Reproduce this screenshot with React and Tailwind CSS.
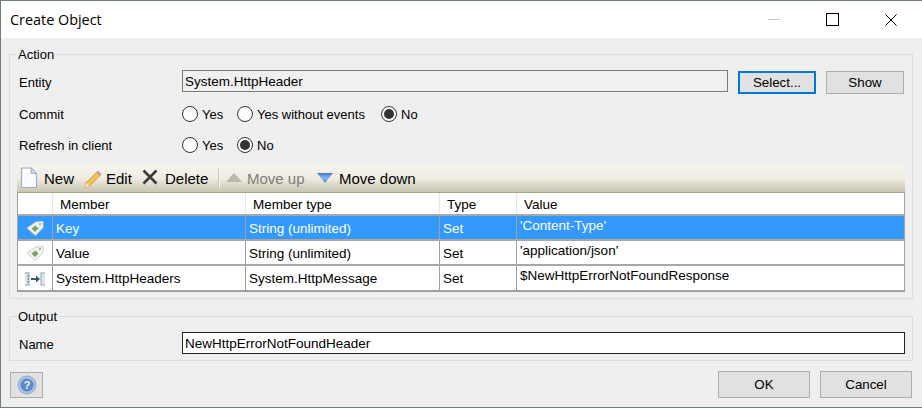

import React from "react";

const ui = "font-['Liberation_Sans','Arial',sans-serif]";

function Radio({ checked, label, className = "" }) {
  return (
    <span className={"flex items-center " + className}>
      <span className="flex h-[16px] w-[16px] shrink-0 items-center justify-center rounded-full border border-[#333] bg-white">
        {checked && <span className="h-[10px] w-[10px] rounded-full bg-[#333]" />}
      </span>
      <span className="ml-[4px] mt-[1px] text-[13px] leading-[16px] text-black">{label}</span>
    </span>
  );
}

function Btn({ children, className = "", focused = false }) {
  return (
    <button
      className={
        "flex items-center justify-center bg-[#e1e1e1] text-[13.33px] text-black " +
        (focused ? "border-2 border-[#0078d7] " : "border border-[#adadad] ") +
        className
      }
    >
      {children}
    </button>
  );
}

function TagIcon() {
  return (
    <svg width="20" height="20" viewBox="0 0 20 20" className="block">
      <path d="M2 10 L11 4 L18 3.5 L18 9.5 L10.5 17.5 Z" fill="#f4f4ef" stroke="#cfcfc8" strokeWidth="1" strokeLinejoin="round" />
      <circle cx="15" cy="6.2" r="1.1" fill="#a5a59e" />
      <path d="M6.5 10.5 L10.5 7.5 L13.5 10.5 L9.8 14 Z" fill="#72a468" />
    </svg>
  );
}

function LinkIcon() {
  return (
    <svg width="22" height="16" viewBox="0 0 22 16" className="block">
      <path d="M1 2 H5 V14 H1 M21 2 H17 V14 H21" fill="#dbe6f1" stroke="#a7bbd0" strokeWidth="1.4" />
      <path d="M7 8 H14" stroke="#44536a" strokeWidth="2" />
      <path d="M12 4.5 L16 8 L12 11.5 Z" fill="#44536a" />
      <path d="M4 4 V12" stroke="#5f7a96" strokeWidth="1" strokeDasharray="2 1" />
    </svg>
  );
}

const rows = [
  { icon: <TagIcon />, member: "Key", type: "String (unlimited)", t: "Set", value: "'Content-Type'", selected: true },
  { icon: <TagIcon />, member: "Value", type: "String (unlimited)", t: "Set", value: "'application/json'" },
  { icon: <LinkIcon />, member: "System.HttpHeaders", type: "System.HttpMessage", t: "Set", value: "$NewHttpErrorNotFoundResponse" },
];

const grid = "grid grid-cols-[35px_193px_194px_77px_1fr]";

function Table() {
  return (
    <div className="h-[99px] border-r border-b-2 border-l border-[#a0a0a0] bg-white text-[13.5px] leading-[16px] text-black">
      <div className={grid + " h-[23px] border-b-2 border-[#a8a8a8]"}>
        {["", "Member", "Member type", "Type", "Value"].map((h, i) => (
          <div key={i} className={"flex items-center pl-[7px] pt-[2px] " + (i < 4 ? "border-r border-[#e6e6e6]" : "")}>
            {h}
          </div>
        ))}
      </div>
      {rows.map((r, i) => {
        const cell = "flex items-center border-r border-[#a0a0a0] pl-[3px] " + (i < 2 ? "pt-[2px]" : "");
        return (
          <div
            key={r.member}
            className={grid + " h-[25px] " + (i < 2 ? "border-b-2 border-[#a8a8a8] " : "") + (r.selected ? "bg-[#3399ff] text-white" : "")}
          >
            <div className="flex items-center justify-center border-r border-[#a0a0a0]">{r.icon}</div>
            <div className={cell}>{r.member}</div>
            <div className={cell}>{r.type}</div>
            <div className={cell}>{r.t}</div>
            <div className="flex items-start pl-[3px] pt-[2px]">{r.value}</div>
          </div>
        );
      })}
    </div>
  );
}

function Toolbar() {
  return (
    <div className="flex h-[28px] items-center rounded-t-[2px] border-b border-[#a8a58e] bg-gradient-to-b from-[#f6f4ef] via-[#eeebe2] to-[#c8c5af] pl-[3px] text-[15px] leading-[16px] text-black">
      <svg width="18" height="22" viewBox="0 0 18 22" className="mt-[-1px] shrink-0">
        <path d="M1.5 1 H11 L16.5 6.5 V20.5 H1.5 Z" fill="#fafbff" stroke="#a4aac8" strokeWidth="1.2" />
        <path d="M11 1 V6.5 H16.5 Z" fill="#d5d9ea" stroke="#a4aac8" strokeWidth="1" />
      </svg>
      <span className="ml-[6px] w-[29px]">New</span>
      <svg width="20" height="20" viewBox="0 0 20 20" className="ml-[10px] shrink-0">
        <path d="M3 14 L13.5 3.5 L17 6.5 L6.5 17 L2 18.5 Z" fill="#f2c25a" stroke="#d49a35" strokeWidth="1" strokeLinejoin="round" />
        <path d="M13.5 3.5 L15 2 L18 5 L17 6.5 Z" fill="#e8a0a0" stroke="#c88" strokeWidth="0.8" />
        <path d="M2 18.5 L3 14 L6.5 17 Z" fill="#f7e6c8" />
      </svg>
      <span className="ml-[3px] w-[26px]">Edit</span>
      <svg width="18" height="18" viewBox="0 0 18 18" className="ml-[9px] mt-[-3px] shrink-0">
        <path d="M2.5 2.5 L15.5 15.5 M15.5 2.5 L2.5 15.5" stroke="#3a3a3a" strokeWidth="2.6" />
      </svg>
      <span className="ml-[6px] w-[44px]">Delete</span>
      <span className="ml-[9px] mr-[5px] h-[19px] w-[2px] shrink-0 border-r border-l border-r-[#f7f6f1] border-l-[#c6c3b2]" />
      <svg width="18" height="12" viewBox="0 0 18 12" className="mt-[-2px] shrink-0">
        <path d="M9 1 L17 10 H1 Z" fill="#b9b8ad" />
      </svg>
      <span className="ml-[4px] w-[59px] text-[#7d7d78]">Move up</span>
      <svg width="18" height="12" viewBox="0 0 18 12" className="ml-[10px] mt-[-1px] shrink-0">
        <defs>
          <linearGradient id="downArrow" x1="0" y1="0" x2="0" y2="1">
            <stop offset="0" stopColor="#3f77cf" />
            <stop offset="0.5" stopColor="#8db4e8" />
            <stop offset="1" stopColor="#4f86d6" />
          </linearGradient>
        </defs>
        <path d="M1 1 H17 L9 11 Z" fill="url(#downArrow)" />
      </svg>
      <span className="ml-[5px]">Move down</span>
    </div>
  );
}

export default function App() {
  return (
    <div className={"flex h-[408px] w-[922px] flex-col border-t border-b border-l border-[#6e7f72] bg-[#efefef] " + ui}>
      <header className="flex h-[37px] shrink-0 items-center justify-between bg-white pl-[9px] font-['Open_Sans',sans-serif] text-[14.4px] text-black">
        <span>Create Object</span>
        <div className="flex items-center">
          <span className="h-[1px] w-[12px] bg-[#c8c8c8]" />
          <span className="ml-[46px] h-[13px] w-[13px] border border-black" />
          <svg width="12" height="12" viewBox="0 0 12 12" className="ml-[46px] mr-[25px]">
            <path d="M0.5 0.5 L11.5 11.5 M11.5 0.5 L0.5 11.5" stroke="#000" strokeWidth="1" />
          </svg>
        </div>
      </header>

      <fieldset className="ml-[8px] mr-[9px] mt-[8px] h-[253px] border border-[#dcdcdc] px-[7px]">
        <legend className="h-[16px] px-[1px] pt-[1px] text-[13px] leading-[16px] text-black">Action</legend>
        <div className="mt-[8px] flex h-[24px] items-start">
          <span className="ml-[2px] w-[163px] pt-[5px] text-[13px] leading-[16px] text-black">Entity</span>
          <div className="flex h-[22px] w-[546px] items-center border border-[#7a7a7a] bg-[#f0f0f0] pl-[2px] pt-[2px] text-[13.5px] text-black">
            System.HttpHeader
          </div>
          <Btn focused className="ml-[10px] mt-[1px] h-[23px] w-[78px]">Select...</Btn>
          <Btn className="ml-[10px] mt-[1px] h-[23px] w-[78px]">Show</Btn>
        </div>
        <div className="mt-[12px] flex h-[16px] items-center">
          <span className="ml-[2px] mt-[2px] w-[163px] text-[13px] leading-[16px] text-black">Commit</span>
          <Radio label="Yes" className="w-[55px]" />
          <Radio label="Yes without events" className="w-[144px]" />
          <Radio label="No" checked />
        </div>
        <div className="mt-[15px] flex h-[16px] items-center">
          <span className="ml-[2px] mt-[2px] w-[163px] text-[13px] leading-[16px] text-black">Refresh in client</span>
          <Radio label="Yes" className="w-[55px]" />
          <Radio label="No" checked />
        </div>
        <div className="mt-[12px]">
          <Toolbar />
          <Table />
        </div>
      </fieldset>

      <fieldset className="ml-[8px] mr-[9px] mt-[9px] h-[53px] border border-[#dcdcdc] px-[7px]">
        <legend className="h-[16px] px-[1px] pt-[1px] text-[13px] leading-[16px] text-black">Output</legend>
        <div className="mt-[8px] flex h-[22px] items-center">
          <span className="ml-[2px] mt-[3px] w-[163px] text-[13px] text-black">Name</span>
          <div className="flex h-[22px] flex-1 items-center border border-[#222] bg-white pl-[2px] pt-[2px] text-[13.5px] text-black">
            NewHttpErrorNotFoundHeader
          </div>
        </div>
      </fieldset>

      <footer className="mt-[10px] flex items-center pl-[9px] pr-[10px]">
        <Btn className="h-[26px] w-[33px]">
          <svg width="20" height="20" viewBox="0 0 20 20">
            <circle cx="10" cy="10" r="9" fill="#a9c1e2" stroke="#8fa9d0" />
            <circle cx="10" cy="10" r="6.5" fill="#5a8ac8" />
            <text x="10" y="14" textAnchor="middle" fontSize="11" fontWeight="700" fill="#eaf1fb" fontFamily="'Liberation Sans',sans-serif">?</text>
          </svg>
        </Btn>
        <div className="ml-auto flex gap-[10px]">
          <Btn className="h-[27px] w-[92px]">OK</Btn>
          <Btn className="h-[27px] w-[92px]">Cancel</Btn>
        </div>
      </footer>
    </div>
  );
}
